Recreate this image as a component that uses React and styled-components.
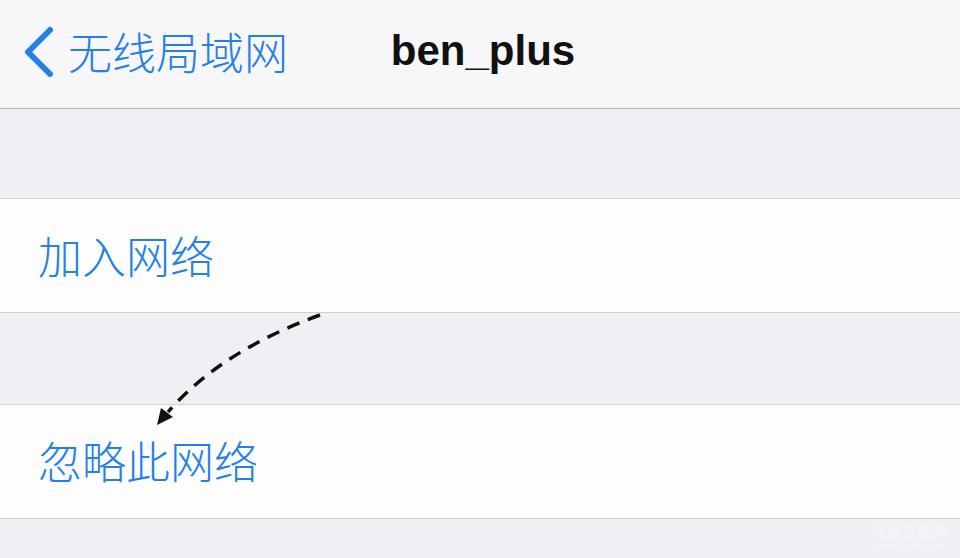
import React from "react";
import styled, { createGlobalStyle } from "styled-components";

const Global = createGlobalStyle`
  html, body { margin: 0; padding: 0; }
  body { background: #efeff4; font-family: "Noto Sans CJK SC", "Noto Sans", sans-serif; }
`;

const Page = styled.div`
  position: relative;
  width: 960px;
  height: 558px;
  overflow: hidden;
  background: #efeff4;
  display: flex;
  flex-direction: column;
`;

const NavBar = styled.header`
  height: 108px;
  flex: none;
  background: #f7f7f9;
  border-bottom: 1px solid #b4b4b8;
  display: grid;
  grid-template-columns: 1fr auto 1fr;
  align-items: center;
  box-sizing: content-box;
`;

const Back = styled.div`
  display: flex;
  align-items: center;
  gap: 14px;
  padding-left: 22px;
  color: #2480e4;
  font-family: "Noto Sans CJK SC", sans-serif;
  font-weight: 300;
  font-size: 44px;
  line-height: 1;
  margin-top: -6px;
`;

const Title = styled.div`
  font-family: "Liberation Sans", Arial, sans-serif;
  font-weight: 700;
  font-size: 42px;
  color: #111;
  margin-top: -6px;
  padding-left: 6px;
`;

const Gap = styled.div`
  height: ${(p) => p.$h}px;
  flex: none;
`;

const Cell = styled.div`
  height: 113px;
  flex: none;
  background: #fdfdfe;
  border-top: 1px solid #cfcfd4;
  border-bottom: 1px solid #cfcfd4;
  display: flex;
  align-items: center;
  padding-left: 38px;
  color: #2480e4;
  font-weight: 300;
  font-size: 44px;
  line-height: 1;
  box-sizing: content-box;
`;

const CellText = styled.span`
  margin-top: ${(p) => p.$dy || 0}px;
`;

const Arrow = styled.svg`
  position: absolute;
  left: 0;
  top: 0;
  pointer-events: none;
`;

const Watermark = styled.div`
  position: absolute;
  right: 12px;
  bottom: 8px;
  display: flex;
  flex-direction: column;
  align-items: center;
  color: rgba(255, 255, 255, 0.6);
  line-height: 1;
`;

const WmTitle = styled.span`
  font-size: 14px;
  letter-spacing: 1px;
`;

const WmUrl = styled.span`
  font-family: "Liberation Sans", sans-serif;
  font-size: 8px;
  margin-top: 4px;
  letter-spacing: 1px;
`;

export default function App() {
  return (
    <>
      <Global />
      <Page>
        <NavBar>
          <Back>
            <svg width="32" height="52" viewBox="0 0 32 52">
              <path
                d="M28 5 L6 27 L28 49"
                fill="none"
                stroke="#2480e4"
                strokeWidth="6"
                strokeLinecap="round"
                strokeLinejoin="round"
              />
            </svg>
            <span>无线局域网</span>
          </Back>
          <Title>ben_plus</Title>
          <div />
        </NavBar>
        <Gap $h={89} />
        <Cell>
          <CellText $dy={-2}>加入网络</CellText>
        </Cell>
        <Gap $h={91} />
        <Cell>
          <CellText $dy={-4}>忽略此网络</CellText>
        </Cell>
        <Arrow width="960" height="558" viewBox="0 0 960 558">
          <path
            d="M320 315 Q221 351 168 412"
            fill="none"
            stroke="#111"
            strokeWidth="3.5"
            strokeDasharray="13 9"
          />
          <polygon points="157,425 173,417 161,408" fill="#111" />
        </Arrow>
        <Watermark>
          <WmTitle>电脑装配网</WmTitle>
          <WmUrl>www.dnzp.com</WmUrl>
        </Watermark>
      </Page>
    </>
  );
}
